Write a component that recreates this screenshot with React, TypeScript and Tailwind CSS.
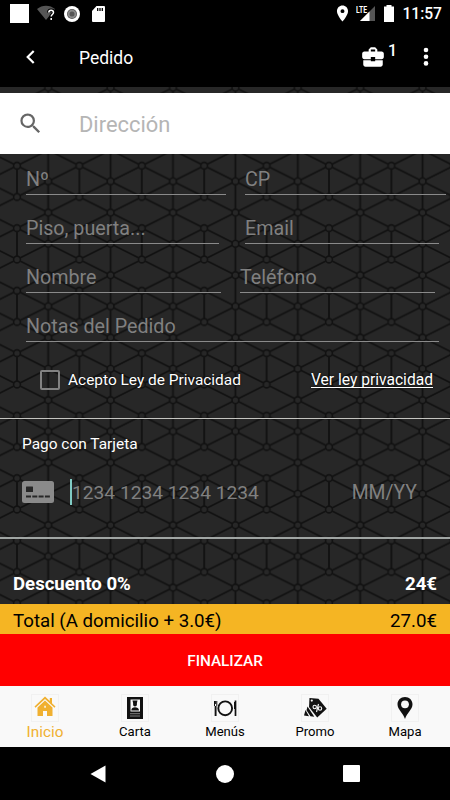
import React from 'react';
import { MdSearch, MdBusinessCenter, MdLocationOn } from 'react-icons/md';

const Field: React.FC<{ label: string; className: string }> = ({ label, className }) => (
    <div className={`h-[49px] border-b border-[#8a8a8a] flex items-end pb-[2px] text-[19.7px] leading-[24px] text-[#808080] whitespace-nowrap ${className}`}>
        {label}
    </div>
);

const Backdrop: React.FC = () => (
    <svg className="absolute inset-0 w-full h-full" aria-hidden="true">
        <defs>
            <pattern id="mesh" x="17" y="16.2" width="62.4" height="62.5" patternUnits="userSpaceOnUse">
                <rect width="62.5" height="62.5" fill="#272727" />
                <g stroke="#111111" strokeWidth="1.8" fill="none">
                    <path d="M31.2 0V62.5M0 0V31.25M62.4 0V31.25" />
                    <path d="M0 0L31.2 15.6L62.4 0M0 31.25L31.2 15.6L62.4 31.25M0 31.25L31.2 46.9L62.4 31.25M0 62.5L31.2 46.9L62.4 62.5" />
                </g>
                <g stroke="#111111" strokeWidth="1.6" fill="#272727">
                    <circle cx="0" cy="0" r="3.4" />
                    <circle cx="62.4" cy="0" r="3.4" />
                    <circle cx="0" cy="62.5" r="3.4" />
                    <circle cx="62.4" cy="62.5" r="3.4" />
                    <circle cx="0" cy="31.25" r="3.4" />
                    <circle cx="62.4" cy="31.25" r="3.4" />
                    <circle cx="31.2" cy="15.6" r="3.4" />
                    <circle cx="31.2" cy="46.9" r="3.4" />
                </g>
            </pattern>
        </defs>
        <rect width="100%" height="100%" fill="url(#mesh)" />
    </svg>
);

const HomeIcon = () => (
    <svg width="26" height="26" viewBox="0 0 26 26" fill="#f0b030">
        <path d="M13 1.500L2.500 11.500l1 1.200L13 4.100l9.500 8.600 1-1.200-3.500-3.300V3h-2.200v3z" />
        <path d="M13 5.500l-7.500 7V21h5.500v-5h4v5h5.500v-8.500z" />
        <path d="M12.300 10.700h1.500v2h-1.500z" fill="#f9f9f9" />
    </svg>
);

const MenuBookIcon = () => (
    <svg width="26" height="26" viewBox="0 0 26 26">
        <path d="M5 2h16v22H5z" fill="#111" />
        <path d="M8.500 4.500h9.500v12H8.500z" fill="#f9f9f9" />
        <path d="M10.500 5.500h5l-.6 2.500v1.500c0 1-.8 2-1.900 2s-1.900-1-1.900-2V8zM9.300 15.500c0-2.500 1.700-3.300 3.700-3.300s4 .8 4 3.300z" fill="#111" />
        <path d="M8 18.700h10M8 21h10" stroke="#999" strokeWidth=".8" />
    </svg>
);

const PlateIcon = () => (
    <svg width="26" height="26" viewBox="0 0 26 26" fill="none" stroke="#111">
        <circle cx="13.200" cy="13.300" r="6.900" strokeWidth="1.900" />
        <path d="M2.500 6v5M4.800 6v5M3.600 6v3" strokeWidth="1" />
        <path d="M3.600 11v10" strokeWidth="1.900" />
        <path d="M23.500 5.500V21" strokeWidth="1.700" />
        <path d="M22.500 7v7" strokeWidth="1" />
    </svg>
);

const TagsIcon = () => (
    <svg width="26" height="26" viewBox="0 0 26 26">
        <path d="M7.500 3l9 .8 8.200 10-9.500 8.700L7 12z" fill="#111" />
        <path d="M5.500 11.500l6.800 10.300-3.800-.5-4-6zM3.500 15l3.500 6.300-5-.8z" fill="#111" />
        <circle cx="9.800" cy="5.600" r="1.100" fill="#f9f9f9" />
        <g stroke="#f9f9f9" strokeWidth="1.100" fill="none">
            <circle cx="12.700" cy="12" r="1.700" />
            <circle cx="18" cy="13.500" r="1.700" />
            <path d="M16.500 9l-2 8" />
        </g>
    </svg>
);

const PinIcon = () => (
    <svg width="26" height="26" viewBox="0 0 26 26">
        <path d="M13 2C8.700 2 5.500 5.200 5.500 9.300 5.500 14.500 11 18 13 24c2-6 7.500-9.500 7.500-14.700C20.500 5.200 17.300 2 13 2z" fill="#111" />
        <circle cx="13" cy="9.300" r="3.900" fill="#f9f9f9" />
    </svg>
);

const tabs = [
    { label: 'Inicio', icon: <HomeIcon />, active: true },
    { label: 'Carta', icon: <MenuBookIcon /> },
    { label: 'Menús', icon: <PlateIcon /> },
    { label: 'Promo', icon: <TagsIcon /> },
    { label: 'Mapa', icon: <PinIcon /> },
];

const App: React.FC = () => {
    return (
        <div className="w-[450px] h-[800px] overflow-hidden bg-black flex flex-col font-['Roboto',sans-serif] text-white">
            <div className="h-[27px] shrink-0 flex items-center justify-between pl-[10px] pr-[8px]">
                <div className="flex items-center">
                    <div className="w-[19px] h-[19px] bg-white" />
                    <svg className="ml-[8px]" width="19" height="17" viewBox="0 0 19 17">
                        <path d="M0 4C5-.5 13-.5 18 4L9 15z" fill="#555" />
                        <path d="M11.800 7.500c0-3 4.700-3 4.700 0 0 2-2.300 2-2.300 4M14.200 13v2" stroke="#000" strokeWidth="3.500" fill="none" />
                        <path d="M11.800 7.500c0-3 4.700-3 4.700 0 0 2-2.300 2-2.300 4M14.200 13v2" stroke="#fff" strokeWidth="1.500" fill="none" />
                    </svg>
                    <svg className="ml-[8px]" width="16" height="16" viewBox="0 0 16 16">
                        <circle cx="8" cy="8" r="8" fill="#fff" />
                        <circle cx="8" cy="8" r="5" fill="#555" />
                        <circle cx="8" cy="8" r="4.300" fill="#8a8a8a" />
                        <circle cx="8" cy="8" r="2.500" fill="#555" />
                    </svg>
                    <svg className="ml-[12px]" width="13" height="16" viewBox="0 0 13 16">
                        <path d="M4.500 0H12a1 1 0 0 1 1 1v14a1 1 0 0 1-1 1H1a1 1 0 0 1-1-1V5z" fill="#fff" />
                        <path d="M5.700 2v3M8 2v3M10.300 2v3" stroke="#000" strokeWidth="1.300" />
                    </svg>
                </div>
                <div className="flex items-center">
                    <MdLocationOn size={19} className="mr-[4px]" />
                    <svg width="20" height="17" viewBox="0 0 20 17">
                        <path d="M19 1v15H4z" fill="#555" />
                        <path d="M13.500 6.500V16H4z" fill="#fff" />
                        <text x="0" y="7.500" fontSize="8.500" fontWeight="700" textLength="11" lengthAdjust="spacingAndGlyphs" fill="#fff">LTE</text>
                    </svg>
                    <svg className="ml-[8px] mr-[8px]" width="10" height="17" viewBox="0 0 10 17">
                        <path d="M2.500 0h5v1.500H10V17H0V1.500h2.500z" fill="#fff" />
                    </svg>
                    <span className="text-[15.600px] leading-[20px] font-medium">11:57</span>
                </div>
            </div>

            <header className="h-[60px] shrink-0 flex items-center pl-[25px] pr-[21px]">
                <svg width="11" height="14" viewBox="0 0 11 14" fill="none" stroke="#fff" strokeWidth="2.200">
                    <path d="M8.700 1L2.700 7l6 6" />
                </svg>
                <h1 className="ml-[43px] mt-px text-[17.5px] leading-[24px]">Pedido</h1>
                <div className="ml-auto flex items-center">
                    <MdBusinessCenter size={26} />
                    <span className="ml-[2px] mb-[12px] text-[16px] leading-[18px] font-medium">1</span>
                    <svg className="ml-[26px]" width="6" height="20" viewBox="0 0 6 20" fill="#fff">
                        <circle cx="3" cy="3" r="2.300" />
                        <circle cx="3" cy="9.700" r="2.300" />
                        <circle cx="3" cy="16.400" r="2.300" />
                    </svg>
                </div>
            </header>

            <main className="relative h-[517px] shrink-0">
                <Backdrop />
                <div className="relative flex flex-col pt-[6px]">
                    <div className="h-[61px] bg-white flex items-center pl-[17px]">
                        <MdSearch size={27} className="text-[#666]" />
                        <span className="ml-[35px] mt-[2px] text-[21.900px] leading-[28px] text-[#b5b5b5]">Dirección</span>
                    </div>

                    <div className="-mt-[8px]">
                        <div className="flex pl-[26px] gap-[19px]">
                            <Field label="Nº" className="w-[200px]" />
                            <Field label="CP" className="w-[201px]" />
                        </div>
                        <div className="flex pl-[26px] gap-[26px]">
                            <Field label="Piso, puerta..." className="w-[193px]" />
                            <Field label="Email" className="w-[194px]" />
                        </div>
                        <div className="flex pl-[26px] gap-[19px]">
                            <Field label="Nombre" className="w-[195px]" />
                            <Field label="Teléfono" className="w-[195px]" />
                        </div>
                        <div className="flex pl-[26px]">
                            <Field label="Notas del Pedido" className="w-[413px]" />
                        </div>
                    </div>

                    <div className="h-[76px] flex items-center pl-[40px] pr-[17px] text-[15.450px] leading-[20px] [text-shadow:0_0_2px_#000]">
                        <span className="w-[20px] h-[20px] rounded-[2px] border-2 border-[#828282]" />
                        <span className="ml-[8px]">Acepto Ley de Privacidad</span>
                        <a className="ml-auto text-[15.600px] underline underline-offset-2 decoration-1 [text-decoration-skip-ink:none]">Ver ley privacidad</a>
                    </div>
                    <div className="h-px bg-[#c4c4c0]" />

                    <div className="h-[118px]">
                        <p className="pt-[15px] pl-[22px] text-[15.450px] leading-[20px]">Pago con Tarjeta</p>
                        <div className="mt-[25px] h-[26px] flex items-center pl-[22px] pr-[33px] text-[19.200px] leading-[26px] text-[#808080]">
                            <svg width="32" height="22" viewBox="0 0 32 22">
                                <rect width="32" height="22" rx="2.500" fill="#8a8a8a" />
                                <rect x="4" y="5.500" width="7" height="5.500" rx=".5" fill="#272727" />
                                <path d="M4 15.500h24" stroke="#272727" strokeWidth="2" strokeDasharray="5 1.300" />
                            </svg>
                            <span className="ml-[16px] w-[2px] h-[26px] bg-[#80cbc4]" />
                            <span className="mt-px">1234 1234 1234 1234</span>
                            <span className="ml-auto mt-px text-[19.400px]">MM/YY</span>
                        </div>
                    </div>
                    <div className="h-[2px] bg-[#a0a5a3]" />

                    <div className="h-[65px] flex items-end justify-between px-[13px] pb-[8px] text-[18.600px] leading-[24px] font-bold">
                        <span>Descuento 0%</span>
                        <span>24€</span>
                    </div>
                </div>
            </main>

            <div className="h-[30px] shrink-0 bg-[#f5b523] text-black flex items-center justify-between px-[13px] pt-[3px] text-[18.700px] leading-[24px]">
                <span>Total (A domicilio + 3.0€)</span>
                <span>27.0€</span>
            </div>
            <button className="h-[52px] shrink-0 bg-[#ff0000] pt-[2px] text-[15.300px] leading-[20px] font-medium">FINALIZAR</button>

            <nav className="h-[61px] shrink-0 bg-[#f9f9f9] grid grid-cols-5 text-black">
                {tabs.map((tab) => (
                    <div key={tab.label} className="flex flex-col items-center pt-[9px]">
                        <div className="w-[26px] h-[26px] flex items-center justify-center outline outline-[#f1f1f1]">{tab.icon}</div>
                        <span className={tab.active ? 'mt-px text-[15.300px] leading-[20px] text-[#f0b030]' : 'mt-[2px] text-[13.100px] leading-[18px]'}>
                            {tab.label}
                        </span>
                    </div>
                ))}
            </nav>

            <div className="h-[53px] shrink-0 flex items-center pl-[90px]">
                <svg width="17" height="18" viewBox="0 0 17 18" fill="#fff">
                    <path d="M15.500.500v17L.500 9z" />
                </svg>
                <span className="ml-[109px] w-[18px] h-[18px] rounded-full bg-white" />
                <span className="ml-[109px] w-[17px] h-[17px] rounded-[1px] bg-white" />
            </div>
        </div>
    );
};

export default App;
